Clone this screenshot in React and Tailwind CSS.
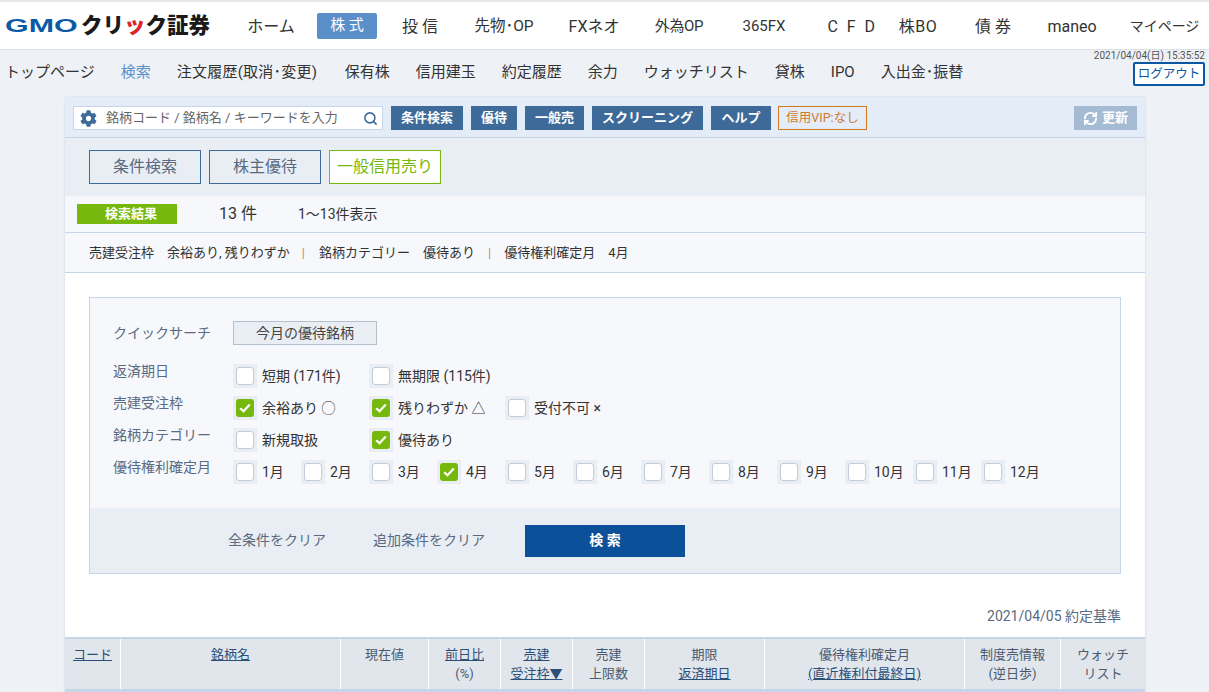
import { RefreshCw, Search } from "lucide-react";
import { FaCog } from "react-icons/fa";

const FONT = { fontFamily: '"Roboto", "Noto Sans CJK JP", sans-serif' };

const TOP_NAV = [
  { label: "ホーム", cls: "w-[46px] ml-[46px] pt-[2px] text-[16px]" },
  { label: "株 式", cls: "w-[60px] ml-[23px] h-[26px] rounded-[2px] bg-[#5b8fca] text-white text-[15px]" },
  { label: "投 信", cls: "w-[36px] ml-[25px] pt-[2px] text-[16px]" },
  { label: "先物･OP", cls: "w-[60px] ml-[36px] pt-[2px] text-[15.5px]" },
  { label: "FXネオ", cls: "w-[50px] ml-[35px] pt-[2px] text-[16px]" },
  { label: "外為OP", cls: "w-[48px] ml-[36px] pt-[2px] text-[15px] tracking-[-0.3px]" },
  { label: "365FX", cls: "w-[44px] ml-[39px] pt-[2px] text-[15px]" },
  { label: "C F D", cls: "w-[51px] ml-[41px] pt-[2px] text-[16px] tracking-[2.5px]" },
  { label: "株BO", cls: "w-[40px] ml-[20px] pt-[2px] text-[16px] tracking-[0.5px]" },
  { label: "債 券", cls: "w-[36px] ml-[37px] pt-[2px] text-[16px]" },
  { label: "maneo", cls: "w-[52px] ml-[35px] pt-[2px] text-[16px]" },
  { label: "マイページ", cls: "w-[67px] ml-[33px] pt-[2px] text-[14px]" },
];

const SUB_NAV = ["トップページ", "検索", "注文履歴(取消･変更)", "保有株", "信用建玉", "約定履歴", "余力", "ウォッチリスト", "貸株", "IPO", "入出金･振替"];

const MONTHS = [
  ["1月"], ["2月"], ["3月"], ["4月", true], ["5月"], ["6月"], ["7月"], ["8月"], ["9月"], ["10月"], ["11月"], ["12月"],
];

function Check({ label, checked, className = "" }) {
  return (
    <div className={`flex items-center ${className}`}>
      <div className="w-[24px] h-[24px] bg-[#e9eef5] flex items-center justify-center shrink-0">
        {checked ? (
          <div className="w-[18px] h-[18px] rounded-[3px] bg-[#76b80d] flex items-center justify-center">
            <svg width="12" height="10" viewBox="0 0 12 10">
              <path d="M1.2 5.2 L4.5 8.2 L10.8 1.6" fill="none" stroke="white" strokeWidth="2.2" />
            </svg>
          </div>
        ) : (
          <div className="w-[18px] h-[18px] rounded-[3px] bg-white border border-[#c3ccd8]" />
        )}
      </div>
      <span className="ml-[5px] text-[14px] text-[#333] whitespace-nowrap">{label}</span>
    </div>
  );
}

function FormRow({ label, children }) {
  return (
    <div className="flex h-[32px] items-center">
      <div className="w-[120px] text-[14px] text-[#5a6a80] -mt-[9px] whitespace-nowrap">{label}</div>
      <div className="flex">{children}</div>
    </div>
  );
}

function ToolButton({ children, className = "" }) {
  return (
    <div className={`h-[24px] bg-[#3d6a99] text-white text-[13px] font-bold flex items-center justify-center whitespace-nowrap ${className}`}>
      {children}
    </div>
  );
}

function HeadCell({ className = "", lines }) {
  return (
    <div className={`flex flex-col items-center pt-[6px] text-[13px] leading-[19px] text-[#4b5a6e] border-r border-white last:border-r-0 ${className}`}>
      {lines.map((line) => (
        <span key={line.text} className={line.link ? "underline text-[#2c4f78]" : ""}>
          {line.text}
        </span>
      ))}
    </div>
  );
}

export default function App() {
  return (
    <div className="h-[692px] overflow-hidden bg-[#eef2f6]" style={FONT}>
      {/* top nav */}
      <header className="h-[50px] bg-white border-t-2 border-b border-t-[#e8e8e8] border-b-[#dde1e5] flex items-center">
        <div className="w-[202px] pl-[5px] pt-[2px] flex items-center shrink-0 whitespace-nowrap">
          <div className="w-[76px] shrink-0">
            <span className="inline-block text-[19px] font-bold text-[#0b5aa5] scale-x-[1.6] origin-left" style={{ fontFamily: '"Liberation Sans", sans-serif' }}>
              GMO
            </span>
          </div>
          <span className="shrink-0 text-[21.5px] font-black text-[#1a1a1a]">
            クリ<span className="text-[#d9252a]">ッ</span>ク証券
          </span>
        </div>
        {TOP_NAV.map((item) => (
          <div key={item.label} className={`flex items-center justify-center shrink-0 whitespace-nowrap text-[#333] ${item.cls}`}>
            {item.label}
          </div>
        ))}
      </header>

      {/* sub nav */}
      <div className="relative h-[47px] flex items-center pl-[5px] pb-[2px] gap-[26px] whitespace-nowrap text-[15px] text-[#333]">
        {SUB_NAV.map((item) => (
          <span
            key={item}
            className={item === "検索" ? "text-[#5b8fca]" : item.startsWith("注文") ? "w-[142px] tracking-[0.25px]" : ""}
          >
            {item}
          </span>
        ))}
        <div className="absolute right-[4px] top-0 text-[10px] leading-[12px] text-[#555]">2021/04/04(日) 15:35:52</div>
        <div className="absolute left-[1133px] top-[12px] w-[72px] h-[24px] bg-white border-2 border-[#0b57a4] rounded-[2px] flex items-center justify-center text-[12.5px] text-[#0b57a4]">
          ログアウト
        </div>
      </div>

      {/* panel */}
      <div className="ml-[65px] w-[1080px] bg-white shadow-[0_0_2px_#c5d0dc]">
        <div className="h-[41px] bg-[#e4edf7] border-b border-[#c6d6e8] flex items-center pt-[2px] pl-[8px] pr-[8px]">
          <div className="w-[310px] h-[24px] bg-white border border-[#c6d6e8] flex items-center pl-[6px] pr-[4px]">
            <FaCog size={17} color="#3d6a99" />
            <span className="ml-[9px] text-[13px] text-[#666] flex-1 whitespace-nowrap">銘柄コード / 銘柄名 / キーワードを入力</span>
            <Search size={15} stroke="#3d6a99" strokeWidth={2.5} />
          </div>
          <ToolButton className="ml-[8px] w-[72px]">条件検索</ToolButton>
          <ToolButton className="ml-[8px] w-[46px]">優待</ToolButton>
          <ToolButton className="ml-[8px] w-[59px]">一般売</ToolButton>
          <ToolButton className="ml-[8px] w-[111px]">スクリーニング</ToolButton>
          <ToolButton className="ml-[8px] w-[60px]">ヘルプ</ToolButton>
          <div className="ml-[7px] w-[89px] h-[24px] border border-[#d07a20] flex items-center justify-center text-[12.5px] text-[#d07a30] whitespace-nowrap">
            信用VIP:なし
          </div>
          <div className="ml-auto w-[63px] h-[24px] bg-[#a4bbd3] text-white text-[13px] font-bold flex items-center justify-center gap-[4px]">
            <RefreshCw size={15} strokeWidth={3} />
            更新
          </div>
        </div>

        <div className="h-[58px] bg-[#e9eef5] flex items-start pt-[12px] pl-[24px] gap-[8px]">
          <div className="w-[112px] h-[34px] border border-[#3d6a99] flex items-center justify-center text-[16px] text-[#5a6a80]">条件検索</div>
          <div className="w-[112px] h-[34px] border border-[#3d6a99] flex items-center justify-center text-[16px] text-[#5a6a80]">株主優待</div>
          <div className="w-[112px] h-[34px] border border-[#76b80d] bg-white flex items-center justify-center text-[16px] text-[#76b80d] whitespace-nowrap">一般信用売り</div>
        </div>

        <div className="h-[37px] bg-[#f6f8fc] border-b border-[#c6d6e8] flex items-center pl-[12px] whitespace-nowrap">
          <div className="w-[100px] h-[20px] bg-[#76b80d] text-white text-[13px] font-bold flex items-center justify-center pl-[8px] -mt-[1px]">検索結果</div>
          <span className="ml-[42px] text-[16px] text-[#333]">13 件</span>
          <span className="ml-[41px] text-[14px] text-[#333]">1～13件表示</span>
        </div>

        <div className="h-[40px] bg-[#f6f8fc] border-b border-[#c6d6e8] flex items-center pl-[24px] pt-[1px] text-[13px] text-[#333] whitespace-nowrap">
          <span>売建受注枠</span>
          <span className="ml-[13px]">余裕あり, 残りわずか</span>
          <span className="ml-[12px] text-[#c98a50]">|</span>
          <span className="ml-[14px]">銘柄カテゴリー</span>
          <span className="ml-[13px]">優待あり</span>
          <span className="ml-[13px] text-[#c98a50]">|</span>
          <span className="ml-[13px]">優待権利確定月</span>
          <span className="ml-[13px]">4月</span>
        </div>

        <div className="pt-[24px] px-[24px] h-[364px]">
          <div className="h-[277px] bg-[#f6f8fc] border border-[#c6d6e8] flex flex-col">
            <div className="pl-[23px] pt-[23px] flex-1">
              <div className="flex items-center h-[24px] mb-[15px]">
                <div className="w-[120px] text-[14px] text-[#5a6a80]">クイックサーチ</div>
                <div className="w-[144px] h-[24px] bg-[#e9eef5] border border-[#b4bfcc] flex items-center justify-center text-[14px] text-[#444]">今月の優待銘柄</div>
              </div>
              <FormRow label="返済期日">
                <Check className="w-[136px]" label="短期 (171件)" />
                <Check label="無期限 (115件)" />
              </FormRow>
              <FormRow label="売建受注枠">
                <Check className="w-[136px]" label="余裕あり ◯" checked />
                <Check className="w-[136px]" label="残りわずか △" checked />
                <Check label="受付不可 ×" />
              </FormRow>
              <FormRow label="銘柄カテゴリー">
                <Check className="w-[136px]" label="新規取扱" />
                <Check label="優待あり" checked />
              </FormRow>
              <FormRow label="優待権利確定月">
                {MONTHS.map(([m, on]) => (
                  <Check key={m} className="w-[68px]" label={m} checked={on} />
                ))}
              </FormRow>
            </div>
            <div className="h-[65px] bg-[#e9eef5] flex items-center pl-[138px] text-[14px] text-[#5a6a80] whitespace-nowrap">
              <span>全条件をクリア</span>
              <span className="ml-[47px]">追加条件をクリア</span>
              <div className="ml-[40px] w-[160px] h-[32px] bg-[#0b5099] text-white font-bold text-[14px] flex items-center justify-center">検 索</div>
            </div>
          </div>
          <div className="text-right text-[14px] text-[#5a6a80] mt-[32px]">2021/04/05 約定基準</div>
        </div>

        {/* table head */}
        <div className="h-[55px] bg-[#e1e6ed] border-t-2 border-b-[3px] border-[#c6d6e8] flex">
          <HeadCell className="w-[56px]" lines={[{ text: "コード", link: true }]} />
          <HeadCell className="w-[220px]" lines={[{ text: "銘柄名", link: true }]} />
          <HeadCell className="w-[88px]" lines={[{ text: "現在値" }]} />
          <HeadCell className="w-[72px]" lines={[{ text: "前日比", link: true }, { text: "(%)" }]} />
          <HeadCell className="w-[72px]" lines={[{ text: "売建", link: true }, { text: "受注枠▼", link: true }]} />
          <HeadCell className="w-[72px]" lines={[{ text: "売建" }, { text: "上限数" }]} />
          <HeadCell className="w-[120px]" lines={[{ text: "期限" }, { text: "返済期日", link: true }]} />
          <HeadCell className="w-[200px]" lines={[{ text: "優待権利確定月" }, { text: "(直近権利付最終日)", link: true }]} />
          <HeadCell className="w-[96px]" lines={[{ text: "制度売情報" }, { text: "(逆日歩)" }]} />
          <HeadCell className="w-[84px]" lines={[{ text: "ウォッチ" }, { text: "リスト" }]} />
        </div>
      </div>
    </div>
  );
}
